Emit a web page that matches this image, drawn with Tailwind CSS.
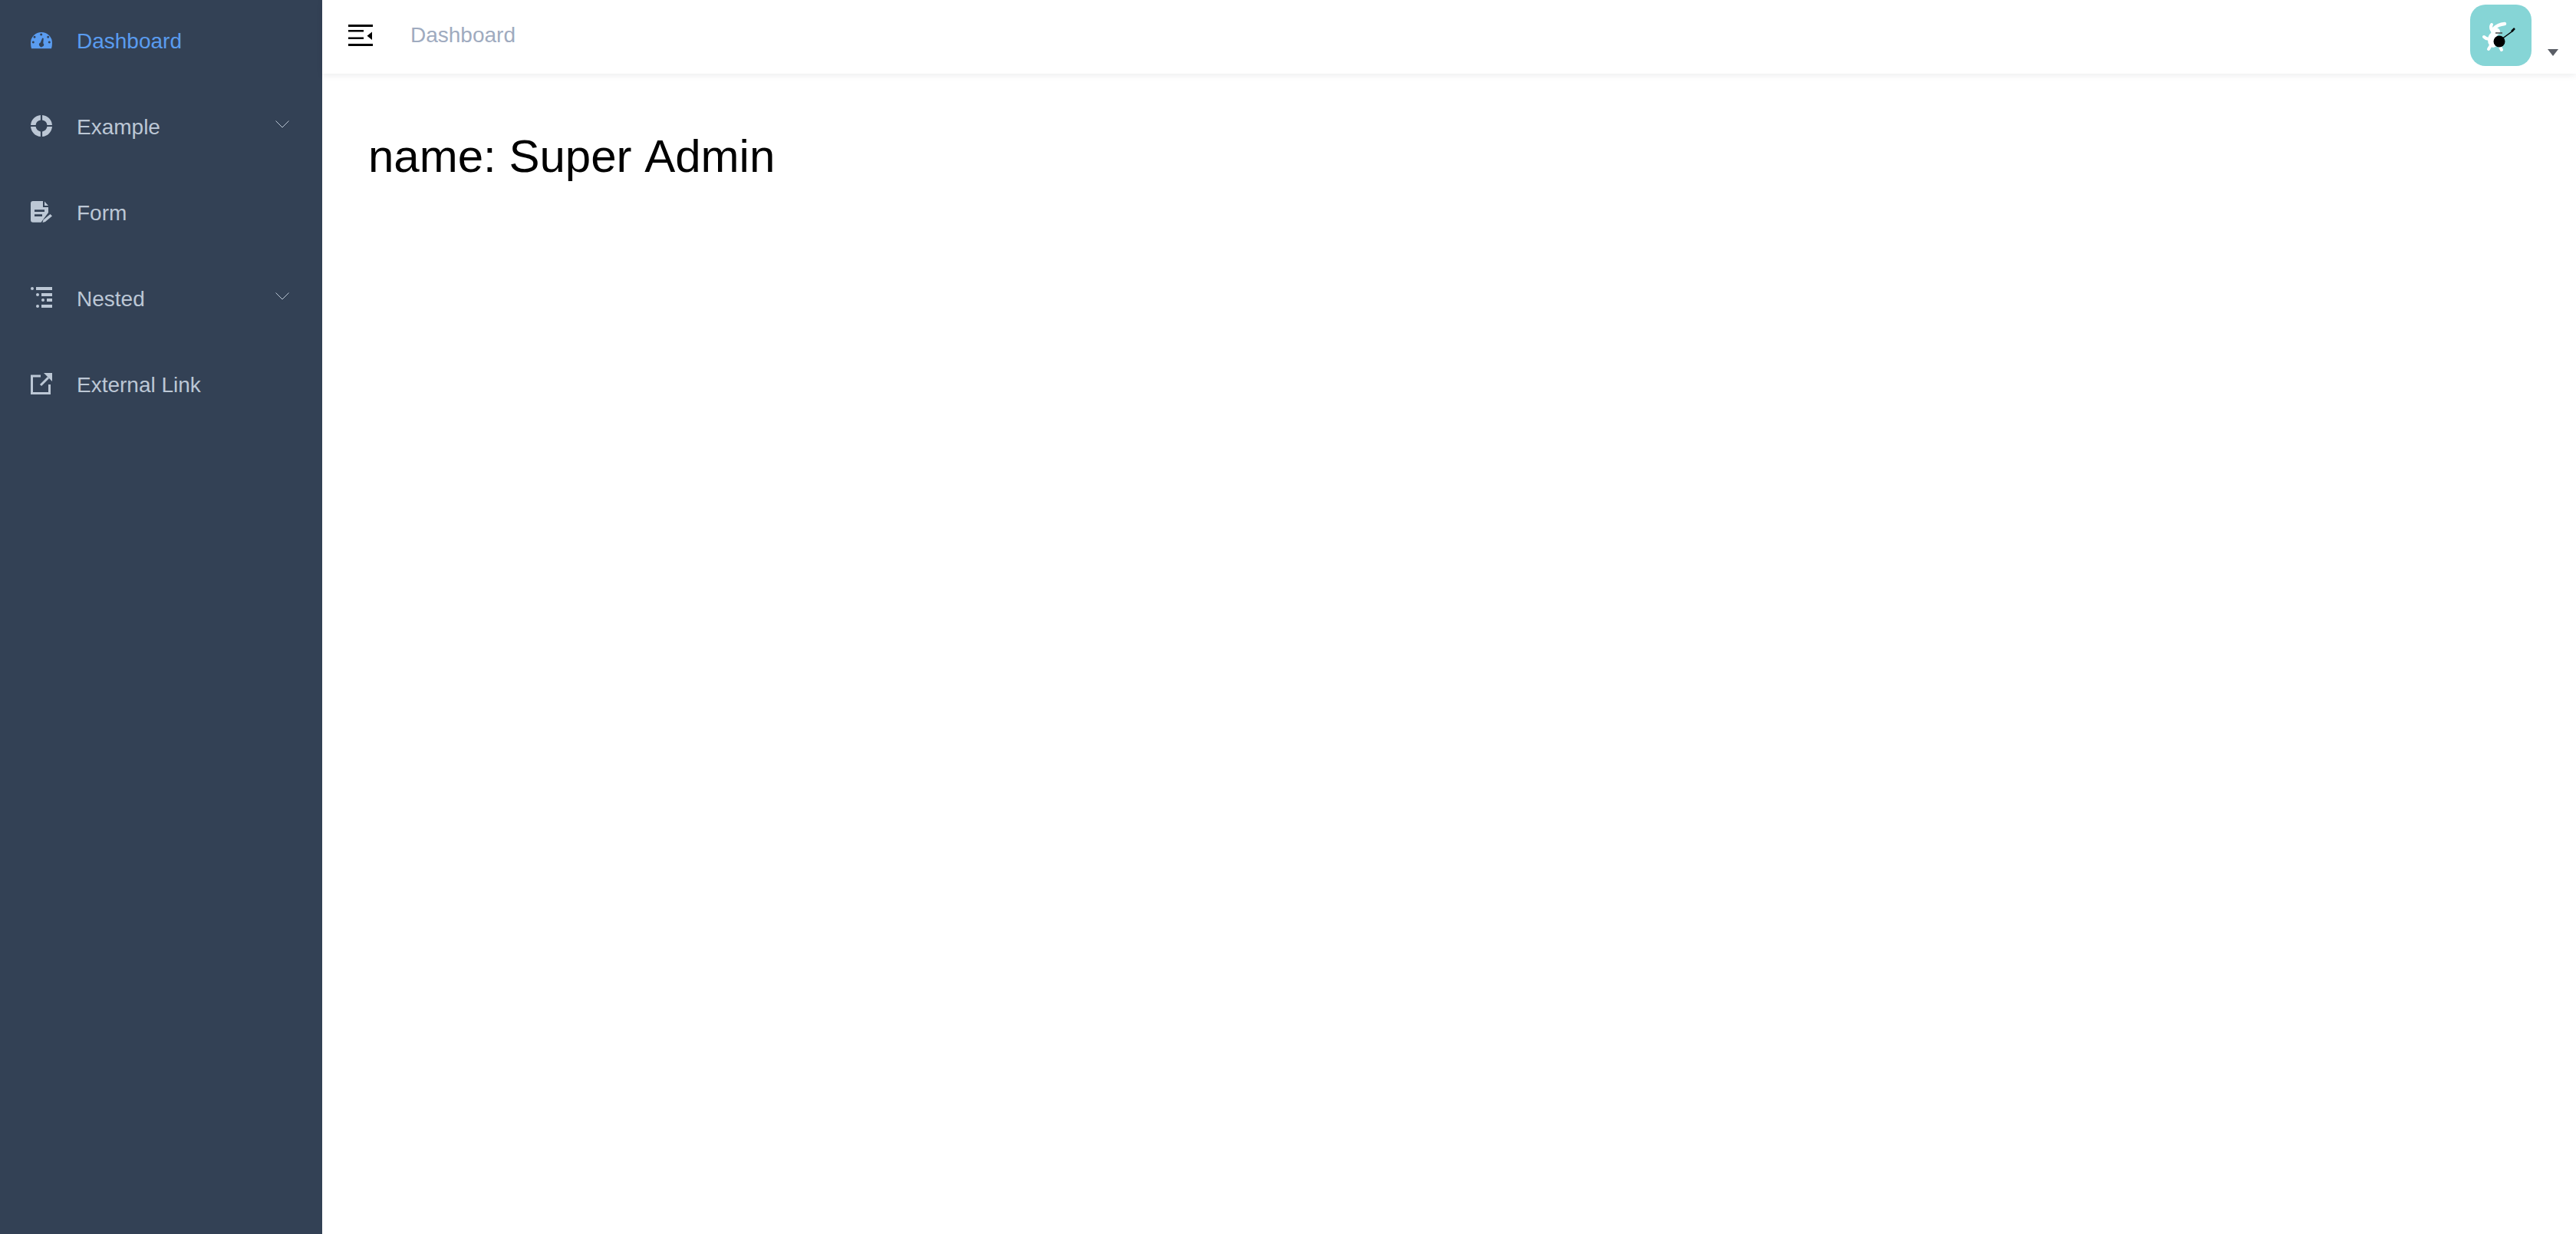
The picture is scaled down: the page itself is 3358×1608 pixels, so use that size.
<!DOCTYPE html>
<html>
  <head>
    <title>Dashboard</title>
    <script src="https://cdn.jsdelivr.net/npm/@tailwindcss/browser@4"></script>
  </head>
  <body class="bg-white font-['Liberation_Sans',Arial,sans-serif]">
    <div class="flex h-[1608px] w-[3358px] overflow-hidden">
      <!-- sidebar -->
      <aside class="w-[420px] shrink-0 bg-[#334155] text-[28px] text-[#bcc7d5]">
        <a class="flex h-[112px] items-center pl-[40px] text-[#5a9cf0]">
          <svg class="mr-[32px] h-[28px] w-[28px] -translate-y-[2px]" viewBox="0 0 28 28" fill="currentColor">
            <path fill-rule="evenodd" d="M1 23.300 Q0 20 0 16 A14 14 0 0 1 28 16 Q28 20 27 23.300 Z M13.700 3.500 a1.500 1.500 0 1 0 .01 0 Z M5 6.800 a1.500 1.500 0 1 0 .01 0 Z M22.700 6.800 a1.500 1.500 0 1 0 .01 0 Z M3.300 13.500 a1.500 1.500 0 1 0 .01 0 Z M24.300 13.500 a1.500 1.500 0 1 0 .01 0 Z M15.200 9.500 L12.700 15.500 A3 3 0 1 0 16.300 16.200 L16.800 10 Z" />
          </svg>
          <span class="mb-[4px]">Dashboard</span>
        </a>
        <a class="flex h-[112px] items-center pl-[40px]">
          <svg class="mr-[32px] h-[28px] w-[28px] -translate-y-[4px]" viewBox="0 0 28 28" fill="currentColor">
            <path d="M12.900 0 V6.600 A7.500 7.500 0 0 0 6.600 12.900 H0 A14 14 0 0 1 12.900 0 Z" />
            <path d="M15.100 0 V6.600 A7.500 7.500 0 0 1 21.400 12.900 H28 A14 14 0 0 0 15.100 0 Z" />
            <path d="M12.900 28 V21.400 A7.500 7.500 0 0 1 6.600 15.100 H0 A14 14 0 0 0 12.900 28 Z" />
            <path d="M15.100 28 V21.400 A7.500 7.500 0 0 0 21.400 15.100 H28 A14 14 0 0 1 15.100 28 Z" />
          </svg>
          <span class="mb-[4px]">Example</span>
          <svg class="ml-auto mr-[43px] h-[10px] w-[18px] -translate-y-[6px]" viewBox="0 0 18 10" fill="none" stroke="currentColor" stroke-width="1">
            <path d="M0.500 0.500 L9 9 L17.500 0.500" />
          </svg>
        </a>
        <a class="flex h-[112px] items-center pl-[40px]">
          <svg class="mr-[32px] h-[28px] w-[28px] -translate-y-[4px]" viewBox="0 0 28 28" fill="currentColor">
            <path fill-rule="evenodd" d="M3 0 H16 V8 H23 V15 L13.500 27.700 H3 Q0 27.700 0 24.700 V3 Q0 0 3 0 Z M5 11.300 V14 H18 V11.300 Z M5 17.300 V20 H15 V17.300 Z" />
            <path d="M18 0.500 L23 6 H18 Z" />
            <path d="M15.500 28 L16.500 24.500 L25.500 17 L28 19.500 L19 27 Z" />
          </svg>
          <span class="mb-[4px]">Form</span>
        </a>
        <a class="flex h-[112px] items-center pl-[40px]">
          <svg class="mr-[32px] h-[28px] w-[28px] -translate-y-[4px]" viewBox="0 0 28 28" fill="currentColor">
            <circle cx="2" cy="2" r="2" />
            <rect x="7" y="0" width="21" height="4" />
            <circle cx="9" cy="10" r="2" />
            <rect x="14" y="8" width="14" height="4" />
            <circle cx="16" cy="17" r="2" />
            <rect x="21" y="15" width="7" height="4" />
            <circle cx="9" cy="25" r="2" />
            <rect x="14" y="23" width="14" height="4" />
          </svg>
          <span class="mb-[4px]">Nested</span>
          <svg class="ml-auto mr-[43px] h-[10px] w-[18px] -translate-y-[6px]" viewBox="0 0 18 10" fill="none" stroke="currentColor" stroke-width="1">
            <path d="M0.500 0.500 L9 9 L17.500 0.500" />
          </svg>
        </a>
        <a class="flex h-[112px] items-center pl-[40px]">
          <svg class="mr-[32px] h-[28px] w-[28px] -translate-y-[4px]" viewBox="0 0 28 28" fill="none">
            <path d="M13 4 H1.500 V26.500 H24.500 V15" stroke="currentColor" stroke-width="3" />
            <path d="M13 16 L23 6" stroke="currentColor" stroke-width="3" />
            <path d="M17 0 H28 V11 Z" fill="currentColor" />
          </svg>
          <span class="mb-[4px]">External Link</span>
        </a>
      </aside>

      <div class="min-w-0 flex-1">
        <!-- navbar -->
        <header class="flex h-[96px] items-center bg-white shadow-[0_2px_8px_rgba(0,21,41,0.08)]">
          <svg class="ml-[34px] h-[28px] w-[32px] -translate-y-[2px]" viewBox="0 0 32 28" fill="#000">
            <rect x="0" y="0" width="32" height="3" />
            <rect x="0" y="7" width="20" height="2.500" />
            <rect x="0" y="16.500" width="20" height="2.500" />
            <rect x="0" y="25" width="32" height="3" />
            <path d="M31 9.500 V20 L24.500 14.700 Z" />
          </svg>
          <span class="mb-[4px] ml-[49px] text-[28px] text-[#9fabbf]">Dashboard</span>
          <div class="relative ml-auto mr-[58px] h-[80px] w-[80px] -translate-y-[2px] rounded-[20px] bg-[#86d5d6]">
            <svg class="h-[80px] w-[80px]" viewBox="0 0 80 80" fill="none">
              <path d="M31 31 Q36 26 45 25" stroke="#fff" stroke-width="4.500" stroke-linecap="round" />
              <path d="M28 33 Q26 29 28 26" stroke="#fff" stroke-width="4" stroke-linecap="round" />
              <ellipse cx="33" cy="35" rx="6" ry="5" fill="#fff" />
              <ellipse cx="30" cy="46" rx="7" ry="10" fill="#fff" />
              <path d="M18 42 Q23 47 28 43" stroke="#fff" stroke-width="4" stroke-linecap="round" />
              <path d="M27 53 L24 58" stroke="#fff" stroke-width="4" stroke-linecap="round" />
              <path d="M38 53 L41 59" stroke="#fff" stroke-width="4" stroke-linecap="round" />
              <path d="M33 37 H42" stroke="#444" stroke-width="1.500" />
              <circle cx="38" cy="48" r="7.500" fill="#000" />
              <path d="M41 45 L56 34" stroke="#000" stroke-width="1.500" />
              <path d="M54 35 L58 31" stroke="#000" stroke-width="2.500" />
            </svg>
            <span class="absolute left-[101px] top-[58px] h-0 w-0 border-x-[7px] border-t-[9px] border-x-transparent border-t-[#5a5e66]"></span>
          </div>
        </header>
        <main class="px-[60px] pt-[62px]">
          <p class="text-[60px] leading-[92px] text-black [font-kerning:none]">name: Super Admin</p>
        </main>
      </div>
    </div>
  </body>
</html>
